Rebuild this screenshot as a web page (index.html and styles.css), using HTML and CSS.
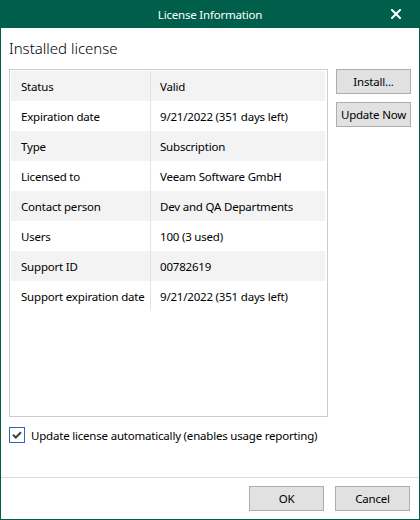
FILE: index.html
```html
<!DOCTYPE html>
<html>
<head>
<meta charset="utf-8">
<link rel="stylesheet" href="styles.css">
</head>
<body>
<div class="window">
  <div class="titlebar">
    <span class="title">License Information</span>
    <svg class="close" width="10" height="10" viewBox="0 0 10 10"><path d="M1 1 L9 9 M9 1 L1 9" stroke="#fff" stroke-width="2" stroke-linecap="square"/></svg>
  </div>
  <div class="content">
    <div class="heading">Installed license</div>
    <div class="main">
      <div class="panel">
        <div class="row odd"><div class="key">Status</div><div class="val">Valid</div></div>
        <div class="row"><div class="key">Expiration date</div><div class="val">9/21/2022 (351 days left)</div></div>
        <div class="row odd"><div class="key">Type</div><div class="val">Subscription</div></div>
        <div class="row"><div class="key">Licensed to</div><div class="val">Veeam Software GmbH</div></div>
        <div class="row odd"><div class="key">Contact person</div><div class="val">Dev and QA Departments</div></div>
        <div class="row"><div class="key">Users</div><div class="val">100 (3 used)</div></div>
        <div class="row odd"><div class="key">Support ID</div><div class="val">00782619</div></div>
        <div class="row"><div class="key">Support expiration date</div><div class="val">9/21/2022 (351 days left)</div></div>
      </div>
      <div class="side">
        <div class="btn">Install...</div>
        <div class="btn">Update Now</div>
      </div>
    </div>
    <div class="check">
      <span class="box"><svg width="10" height="8" viewBox="0 0 10 8"><path d="M1 3.8 L3.8 6.5 L9 1.2" fill="none" stroke="#404040" stroke-width="2"/></svg></span>
      <span class="label">Update license automatically (enables usage reporting)</span>
    </div>
  </div>
  <div class="footer">
    <div class="btn">OK</div>
    <div class="btn">Cancel</div>
  </div>
</div>
</body>
</html>
```
FILE: styles.css
```css
* { box-sizing: border-box; }
html, body { margin: 0; padding: 0; }
body {
  font-family: "Noto Sans", "Open Sans", sans-serif;
  font-size: 11.5px;
  letter-spacing: -0.2px;
  color: #000;
  background: #fff;
}
.window {
  width: 420px;
  height: 520px;
  display: flex;
  flex-direction: column;
  border: 1px solid #005f4b;
  border-top: none;
  background: #fff;
}
.titlebar {
  height: 28px;
  margin: 0 -1px;
  background: #005f4b;
  color: #fff;
  display: flex;
  align-items: center;
  justify-content: center;
  position: relative;
}
.close {
  position: absolute;
  right: 19px;
  top: 9px;
}
.content {
  flex: 1;
  padding: 8px 8px 0 8px;
  display: flex;
  flex-direction: column;
}
.heading {
  font-size: 15px;
  letter-spacing: 0;
  line-height: 22px;
  font-weight: 300;
  color: #000;
  margin-bottom: 10px;
  margin-top: 1px;
}
.main {
  display: flex;
  gap: 8px;
}
.panel {
  width: 320px;
  height: 348px;
  border: 1px solid #cccccc;
  padding: 1px 2px 1px 1px;
}
.row {
  display: flex;
  height: 30px;
  align-items: stretch;
}
.row.odd { background: #f3f3f3; }
.key {
  width: 140px;
  border-right: 1px solid #e3e3e3;
  padding-left: 10px;
  display: flex;
  align-items: center;
  white-space: nowrap;
}
.val {
  padding-left: 9px;
  display: flex;
  align-items: center;
  white-space: nowrap;
}
.side {
  display: flex;
  flex-direction: column;
  gap: 8px;
}
.btn {
  width: 75px;
  height: 25px;
  background: #e1e1e1;
  border: 1px solid #adadad;
  display: flex;
  align-items: center;
  justify-content: center;
  color: #000;
}
.check {
  margin-top: 10px;
  display: flex;
  align-items: center;
  gap: 6px;
}
.box {
  width: 16px;
  height: 16px;
  border: 1px solid #2a68b5;
  display: flex;
  align-items: center;
  justify-content: center;
  background: #fff;
}
.footer {
  height: 42px;
  border-top: 1px solid #dcdcdc;
  display: flex;
  justify-content: flex-end;
  gap: 11px;
  padding: 8px 9px 0 0;
}
```
